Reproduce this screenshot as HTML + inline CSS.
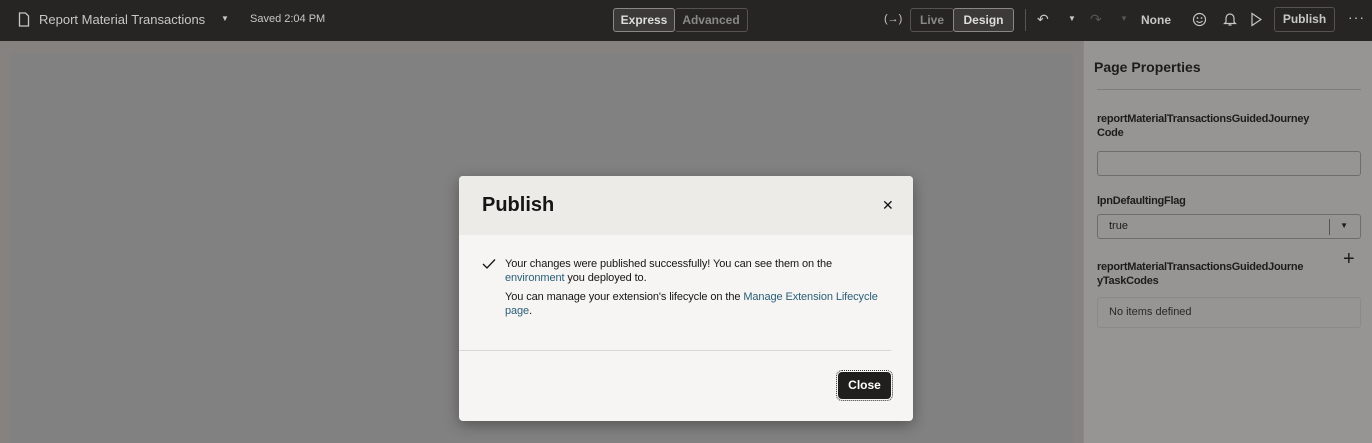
<!DOCTYPE html>
<html><head><meta charset="utf-8"><style>
*{box-sizing:border-box;margin:0;padding:0}
body{width:1372px;height:443px;overflow:hidden;background:#858280;font-family:"Liberation Sans",sans-serif;position:relative}
.top{position:absolute;left:0;top:0;width:1372px;height:41px;background:#262524;color:#c9c7c4;font-size:13px}
.top>*{position:absolute}
.canvas{position:absolute;left:10px;top:53px;width:1063px;height:390px;background:#818181}
.panel{position:absolute;left:1083px;top:41px;width:289px;height:402px;background:#979594;border-left:1px solid #8a8887;color:#1d1c1b}
.panel .l{position:absolute;left:13px;font-size:11px;letter-spacing:-0.25px;font-weight:bold;line-height:14px;white-space:nowrap}
.inp{position:absolute;left:13px;width:264px;border:1px solid #6f6d6b;border-radius:3px;background:#979594;font-size:12px}
.btn{border:1px solid #55524f;border-radius:3px;height:24px;line-height:22px;text-align:center;font-weight:bold;font-size:12px}
.dlg{position:absolute;left:459px;top:176px;width:454px;height:245px;background:#f6f5f3;border-radius:4px;box-shadow:0 4px 14px rgba(0,0,0,.35);overflow:hidden}
.dh{height:59px;background:#ecebe8;position:relative}
.dh h1{position:absolute;left:23px;top:18px;font-size:20px;font-weight:bold;color:#161513}
.msg{position:absolute;left:46px;font-size:11px;letter-spacing:-0.1px;color:#161513;line-height:14px;white-space:nowrap}
a{color:#2a5f78;text-decoration:none}
</style></head><body>
<div class="top">
<svg style="left:18px;top:12px" width="12" height="15" viewBox="0 0 12 15"><path d="M1.5 1h6l3 3v10h-9z" fill="none" stroke="#c9c7c4" stroke-width="1.3"/></svg>
<div style="left:39px;top:12px;font-size:13px">Report Material Transactions</div>
<div style="left:221px;top:14px;font-size:8px">▼</div>
<div style="left:250px;top:13px;font-size:11px">Saved 2:04 PM</div>
<div class="btn" style="left:613px;top:8px;width:62px;background:#3c3a38;border-color:#8a8784;color:#ddd">Express</div>
<div class="btn" style="left:675px;top:8px;width:73px;color:#888;border-left:none">Advanced</div>
<div style="left:884px;top:13px;font-size:11px">(→)</div>
<div class="btn" style="left:910px;top:8px;width:44px;color:#888">Live</div>
<div class="btn" style="left:953px;top:8px;width:61px;background:#3c3a38;border-color:#8a8784;color:#ddd">Design</div>
<div style="left:1025px;top:9px;width:1px;height:22px;background:#555"></div>
<div style="left:1037px;top:11px;font-size:14px">↶</div>
<div style="left:1068px;top:14px;font-size:8px">▼</div>
<div style="left:1090px;top:11px;font-size:14px;color:#555">↷</div>
<div style="left:1120px;top:14px;font-size:8px;color:#555">▼</div>
<div style="left:1141px;top:13px;font-weight:bold;font-size:12px">None</div>
<svg style="left:1192px;top:12px" width="15" height="15" viewBox="0 0 15 15"><circle cx="7.5" cy="7.5" r="6" fill="none" stroke="#c9c7c4" stroke-width="1.2"/><circle cx="5.5" cy="6" r=".9" fill="#c9c7c4"/><circle cx="9.5" cy="6" r=".9" fill="#c9c7c4"/><path d="M4.5 9q3 3 6 0" fill="none" stroke="#c9c7c4" stroke-width="1.1"/></svg>
<svg style="left:1223px;top:12px" width="14" height="15" viewBox="0 0 14 15"><path d="M3 10V6a4 4 0 0 1 8 0v4l1.5 1.5h-11z M5.5 13h3" fill="none" stroke="#c9c7c4" stroke-width="1.2"/></svg>
<svg style="left:1250px;top:12px" width="12" height="15" viewBox="0 0 12 15"><path d="M2 1.5l9 6-9 6z" fill="none" stroke="#c9c7c4" stroke-width="1.2"/></svg>
<div class="btn" style="left:1274px;top:7px;width:61px;height:25px;line-height:23px">Publish</div>
<div style="left:1348px;top:9px;font-size:14px;letter-spacing:1px">···</div>
</div>
<div class="canvas"></div>
<div class="panel">
<div style="position:absolute;left:10px;top:18px;font-size:14px;font-weight:bold">Page Properties</div>
<div style="position:absolute;left:13px;top:48px;width:264px;height:1px;background:#7f7d7b"></div>
<div class="l" style="top:71px">reportMaterialTransactionsGuidedJourney<br>Code</div>
<div class="inp" style="top:110px;height:25px"></div>
<div class="l" style="top:153px">lpnDefaultingFlag</div>
<div class="inp" style="top:173px;height:25px;padding:5px 11px;font-size:11px">true<span style="position:absolute;right:30px;top:4px;width:1px;height:16px;background:#555"></span><span style="position:absolute;right:12px;top:6px;font-size:8px">▼</span></div>
<div class="l" style="top:219px">reportMaterialTransactionsGuidedJourne<br>yTaskCodes</div>
<div style="position:absolute;left:259px;top:207px;font-size:20px">+</div>
<div class="inp" style="top:256px;height:31px;padding:8px 11px;border-color:#8c8a88;color:#2a2826;font-size:11px">No items defined</div>
</div>
<div class="dlg">
<div class="dh"><h1>Publish</h1><div style="position:absolute;left:423px;top:21px;font-size:14px;color:#161513">✕</div></div>
<svg style="position:absolute;left:23px;top:82px" width="14" height="12" viewBox="0 0 14 12"><path d="M1 6l4 4 8-8.5" fill="none" stroke="#161513" stroke-width="1.3"/></svg>
<div class="msg" style="top:81px">Your changes were published successfully! You can see them on the<br><a>environment</a> you deployed to.</div>
<div class="msg" style="top:114px">You can manage your extension's lifecycle on the <a>Manage Extension Lifecycle</a><br><a>page</a>.</div>
<div style="position:absolute;left:0;top:174px;width:432px;height:1px;background:#d9d7d4"></div>
<div style="position:absolute;left:379px;top:196px;width:53px;height:27px;background:#201f1e;border-radius:4px;outline:1px dotted #333;outline-offset:1px;color:#fff;font-size:12px;font-weight:bold;text-align:center;line-height:27px">Close</div>
</div>
</body></html>
